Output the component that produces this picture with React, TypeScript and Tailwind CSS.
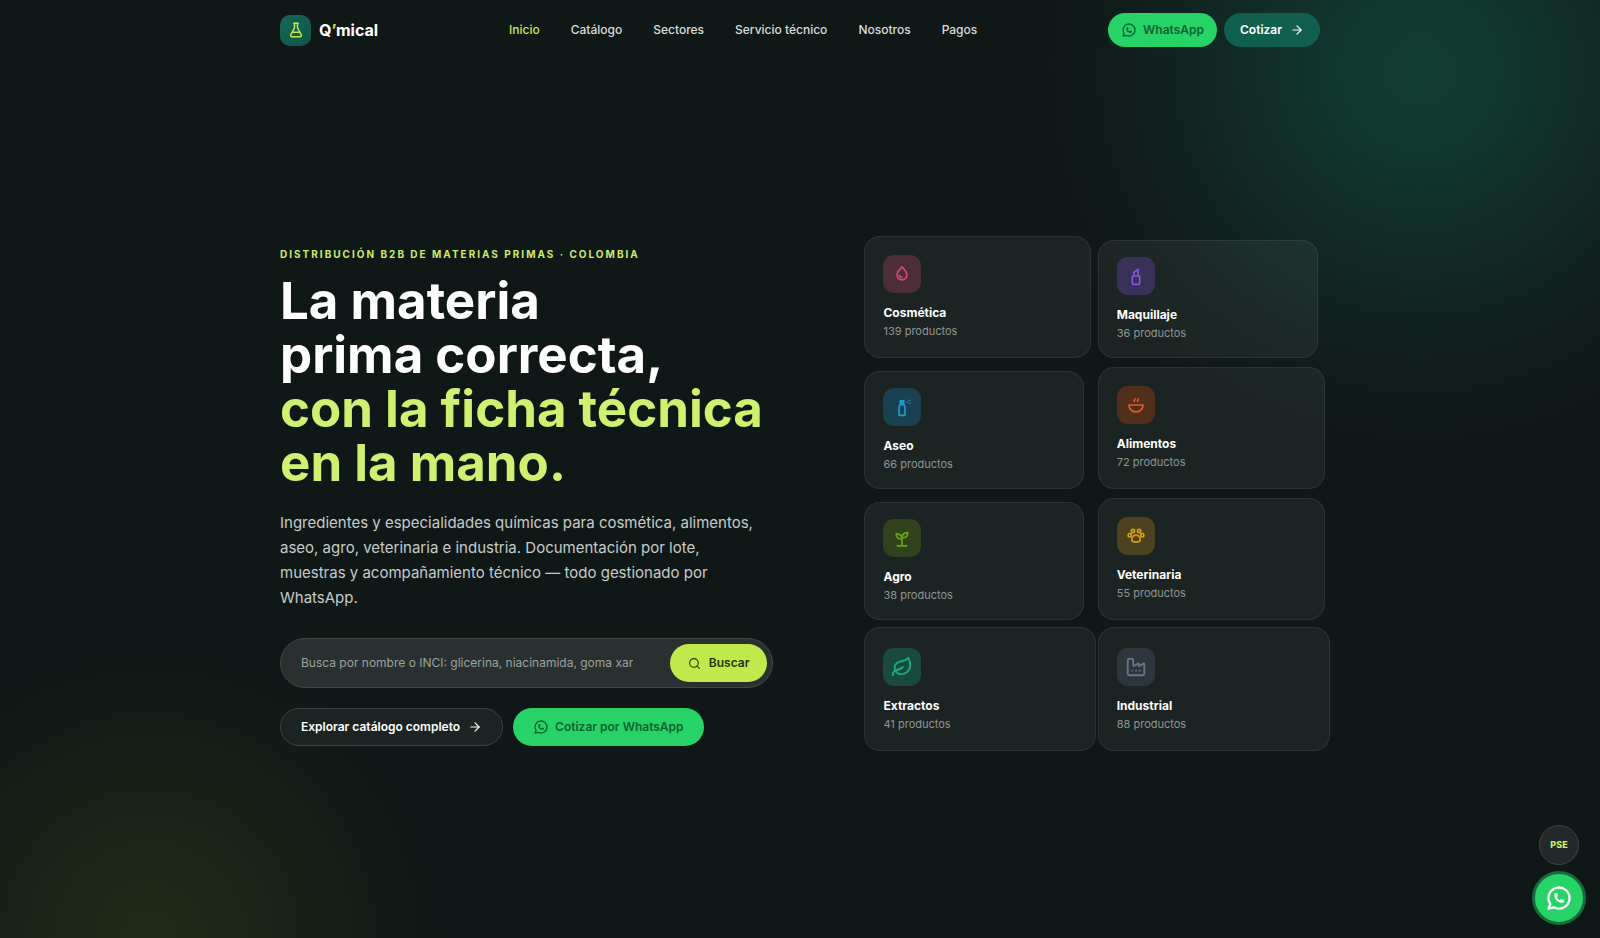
import { useState } from 'react';
import type { ReactNode } from 'react';
import { ArrowRight, Factory, Leaf, Search } from 'lucide-react';

const NAV = ['Inicio', 'Catálogo', 'Sectores', 'Servicio técnico', 'Nosotros', 'Pagos'];

function Svg({ children, className = 'size-5', w = 2 }: { children: ReactNode; className?: string; w?: number }) {
  return (
    <svg viewBox="0 0 24 24" className={className} fill="none" stroke="currentColor" strokeWidth={w} strokeLinecap="round" strokeLinejoin="round" aria-hidden="true">
      {children}
    </svg>
  );
}

function WhatsAppIcon({ className, w = 2 }: { className?: string; w?: number }) {
  return (
    <Svg className={className} w={w}>
      <path d="M3 21l1.65-3.8a9 9 0 1 1 3.4 2.9L3 21" />
      <path d="M9 10a.5.5 0 0 0 1 0V9a.5.5 0 0 0-1 0v1a5 5 0 0 0 5 5h1a.5.5 0 0 0 0-1h-1a.5.5 0 0 0 0 1" />
    </Svg>
  );
}

const SIZES = {
  sm: 'w-[220px] pt-4 pb-[14px]',
  md: 'w-[227px] pt-[18px] pb-4',
  lg: 'w-[232px] pt-5 pb-4',
};

const SECTORES: { nombre: string; productos: number; size: keyof typeof SIZES; tile: string; icon: ReactNode }[] = [
  {
    nombre: 'Cosmética', productos: 139, size: 'md', tile: 'bg-[#4d2d38] text-[#d9487d]',
    icon: (
      <Svg>
        <path d="M12 3.500c3 3.300 6 6.200 6 9.500a6 6 0 0 1-12 0c0-3.300 3-6.200 6-9.500z" />
        <path d="M9 13.500c.3 1.500 1.200 2.400 2.800 2.600" />
      </Svg>
    ),
  },
  {
    nombre: 'Maquillaje', productos: 36, size: 'sm', tile: 'bg-[#3a3158] text-[#8755e0]',
    icon: (
      <Svg>
        <rect x="7.500" y="12" width="9" height="10" rx="1.500" />
        <path d="M9.500 12V7.500L14.500 4v8" />
      </Svg>
    ),
  },
  {
    nombre: 'Aseo', productos: 66, size: 'sm', tile: 'bg-[#1b4150] text-[#1c9bd0]',
    icon: (
      <Svg>
        <path d="M8.500 22V11.500L10 9h4l1.500 2.500V22z" />
        <path d="M10 4.500h4V9h-4z" fill="currentColor" />
        <path d="M18.500 6h.01M21 4h.01M21.500 7.500h.01" />
      </Svg>
    ),
  },
  {
    nombre: 'Alimentos', productos: 72, size: 'md', tile: 'bg-[#50301d] text-[#e35a1c]',
    icon: (
      <Svg>
        <path d="M3.500 12h17c0 4.600-3.500 8.200-8.500 8.200S3.500 16.600 3.500 12z" />
        <path d="M10.800 4.500l-1 3M14.800 4.500l-1 3" />
      </Svg>
    ),
  },
  {
    nombre: 'Agro', productos: 38, size: 'sm', tile: 'bg-[#30431c] text-[#65a816]',
    icon: (
      <Svg>
        <path d="M12 21.500v-9M6.500 21.500h11M12 13.500c-4.500 0-7-2-7-6.500 4.500 0 7 2 7 6.500zM12 12c0-4.500 2.500-6.500 7-6.500 0 4.500-2.500 6.500-7 6.500z" />
      </Svg>
    ),
  },
  {
    nombre: 'Veterinaria', productos: 55, size: 'md', tile: 'bg-[#4c4220] text-[#d5a112]',
    icon: (
      <Svg>
        <circle cx="8.300" cy="6" r="2" />
        <circle cx="15.700" cy="6" r="2" />
        <circle cx="4.500" cy="11.200" r="2" />
        <circle cx="19.500" cy="11.200" r="2" />
        <path d="M9 12c1.500-1.300 4.500-1.300 6 0 1 1 2 2.200 2 4s-1 3-2.500 3h-5C8 19 7 17.800 7 16s1-3 2-4z" />
      </Svg>
    ),
  },
  { nombre: 'Extractos', productos: 41, size: 'lg', tile: 'bg-[#1a4a3d] text-[#16b27c]', icon: <Leaf className="size-[22px]" /> },
  { nombre: 'Industrial', productos: 88, size: 'lg', tile: 'bg-[#2d363d] text-[#647589]', icon: <Factory className="size-[22px]" /> },
];

function Header() {
  return (
    <header className="mx-auto flex h-[60px] w-full max-w-[1040px] items-center justify-between">
      <a href="#inicio" className="flex items-center gap-2 text-base font-bold">
        <span className="flex size-[31px] items-center justify-center rounded-[10px] bg-linear-to-br from-[#17665a] to-[#0f5548] text-[#bfe94b]">
          <Svg className="size-[18px]">
            <path d="M9 3h6M10 3v6l-5 9.500A1.700 1.700 0 0 0 6.500 21h11a1.700 1.700 0 0 0 1.500-2.500L14 9V3M7.500 15h9" />
          </Svg>
        </span>
        <span>Q<span className="text-[#bfe94b]">’</span>mical</span>
      </a>
      <nav className="flex gap-[31px] text-xs font-medium text-[#d9dedc]">
        {NAV.map((n, i) => (
          <a key={n} href={'#' + n} className={i === 0 ? 'text-[#c5ea5b]' : ''}>{n}</a>
        ))}
      </nav>
      <div className="flex gap-[7px] text-xs font-semibold">
        <a href="#whatsapp" className="flex h-[34px] items-center gap-[6px] rounded-full bg-[#27d367] px-[13px] text-[#0b6330]">
          <WhatsAppIcon className="size-4" />
          WhatsApp
        </a>
        <a href="#cotizar" className="flex h-[34px] items-center gap-2 rounded-full bg-[#11604f] px-4">
          Cotizar
          <ArrowRight className="size-[14px]" />
        </a>
      </div>
    </header>
  );
}

export default function App() {
  const [q, setQ] = useState('');

  return (
    <div className="relative flex min-h-screen flex-col overflow-hidden bg-[#101817] text-white [font-family:Inter,sans-serif]">
      <div className="pointer-events-none absolute -top-[320px] -right-[210px] size-[780px] bg-[radial-gradient(closest-side,#123c32,#123c32e0_20%,#123c3288_46%,#123c3228_75%,transparent)]" />
      <div className="pointer-events-none absolute -bottom-[300px] -left-[150px] size-[600px] bg-[radial-gradient(closest-side,#222b17,#222b1788_46%,#222b1728_75%,transparent)]" />

      <div className="relative flex flex-1 flex-col">
        <Header />

        <main className="mx-auto grid w-full max-w-[1040px] flex-1 grid-cols-[13fr_12fr] items-center gap-[91px] pb-[6px]">
          <section>
            <p className="text-[10px] leading-4 font-bold tracking-[2px] text-[#c9ec6a]">DISTRIBUCIÓN B2B DE MATERIAS PRIMAS · COLOMBIA</p>
            <h1 className="mt-3 text-[51px] leading-[54px] font-bold whitespace-nowrap">
              La materia<br />prima correcta,
              <span className="block text-[#cff172]">con la ficha técnica<br />en la mano.</span>
            </h1>
            <p className="mt-5 max-w-[486px] text-[15px] leading-[25px] text-[#c6cccb]">
              Ingredientes y especialidades químicas para cosmética, alimentos, aseo, agro, veterinaria e industria. Documentación por lote, muestras y acompañamiento técnico — todo gestionado por WhatsApp.
            </p>
            <form className="mt-7 flex h-[50px] items-center rounded-full border border-[#414947] bg-[#29302f] pr-[5px] pl-5" onSubmit={e => e.preventDefault()}>
              <input
                aria-label="Buscar productos"
                className="mr-[37px] min-w-0 flex-1 bg-transparent text-xs outline-none placeholder:text-[#9aa5a2]"
                placeholder="Busca por nombre o INCI: glicerina, niacinamida, goma xantana…"
                value={q}
                onChange={e => setQ(e.target.value)}
              />
              <button className="flex h-[38px] items-center gap-2 rounded-full bg-[#c0e94c] px-[18px] text-xs font-semibold text-[#24330f]">
                <Search className="size-[13px]" />
                Buscar
              </button>
            </form>
            <div className="mt-5 flex gap-[10px] text-xs font-semibold">
              <a href="#catalogo" className="flex h-[38px] items-center gap-2 rounded-full border border-[#3b4342] bg-[#1c2423] px-5">
                Explorar catálogo completo
                <ArrowRight className="size-[14px]" />
              </a>
              <a href="#whatsapp" className="flex h-[38px] items-center gap-[6px] rounded-full bg-[#27d367] px-5 text-[#0b6330]">
                <WhatsAppIcon className="size-4" />
                Cotizar por WhatsApp
              </a>
            </div>
          </section>

          <section className="-mr-[11px] grid auto-rows-[125px] grid-cols-2 items-end gap-y-[6px] pb-2">
            {SECTORES.map(s => (
              <a key={s.nombre} href={'#' + s.nombre} className={'rounded-2xl border border-white/7 bg-[#f0fff80e] px-[18px] ' + SIZES[s.size]}>
                <span className={'flex size-[38px] items-center justify-center rounded-[11px] ' + s.tile}>{s.icon}</span>
                <h3 className="mt-3 text-xs leading-4 font-bold">{s.nombre}</h3>
                <p className="text-[11px] leading-5 text-[#8e9694]">{s.productos} productos</p>
              </a>
            ))}
          </section>
        </main>
      </div>

      <div className="fixed right-[14px] bottom-[13px] flex flex-col items-center gap-[6px]">
        <a href="#pse" className="flex size-10 items-center justify-center rounded-full border border-[#3c4443] bg-[#222928] text-[9px] font-extrabold text-[#c9ec6a]">PSE</a>
        <a href="#whatsapp" aria-label="WhatsApp" className="flex size-[54px] items-center justify-center rounded-full border-[3px] border-[#176b3b] bg-[#27d367]">
          <WhatsAppIcon className="size-7" />
        </a>
      </div>
    </div>
  );
}
